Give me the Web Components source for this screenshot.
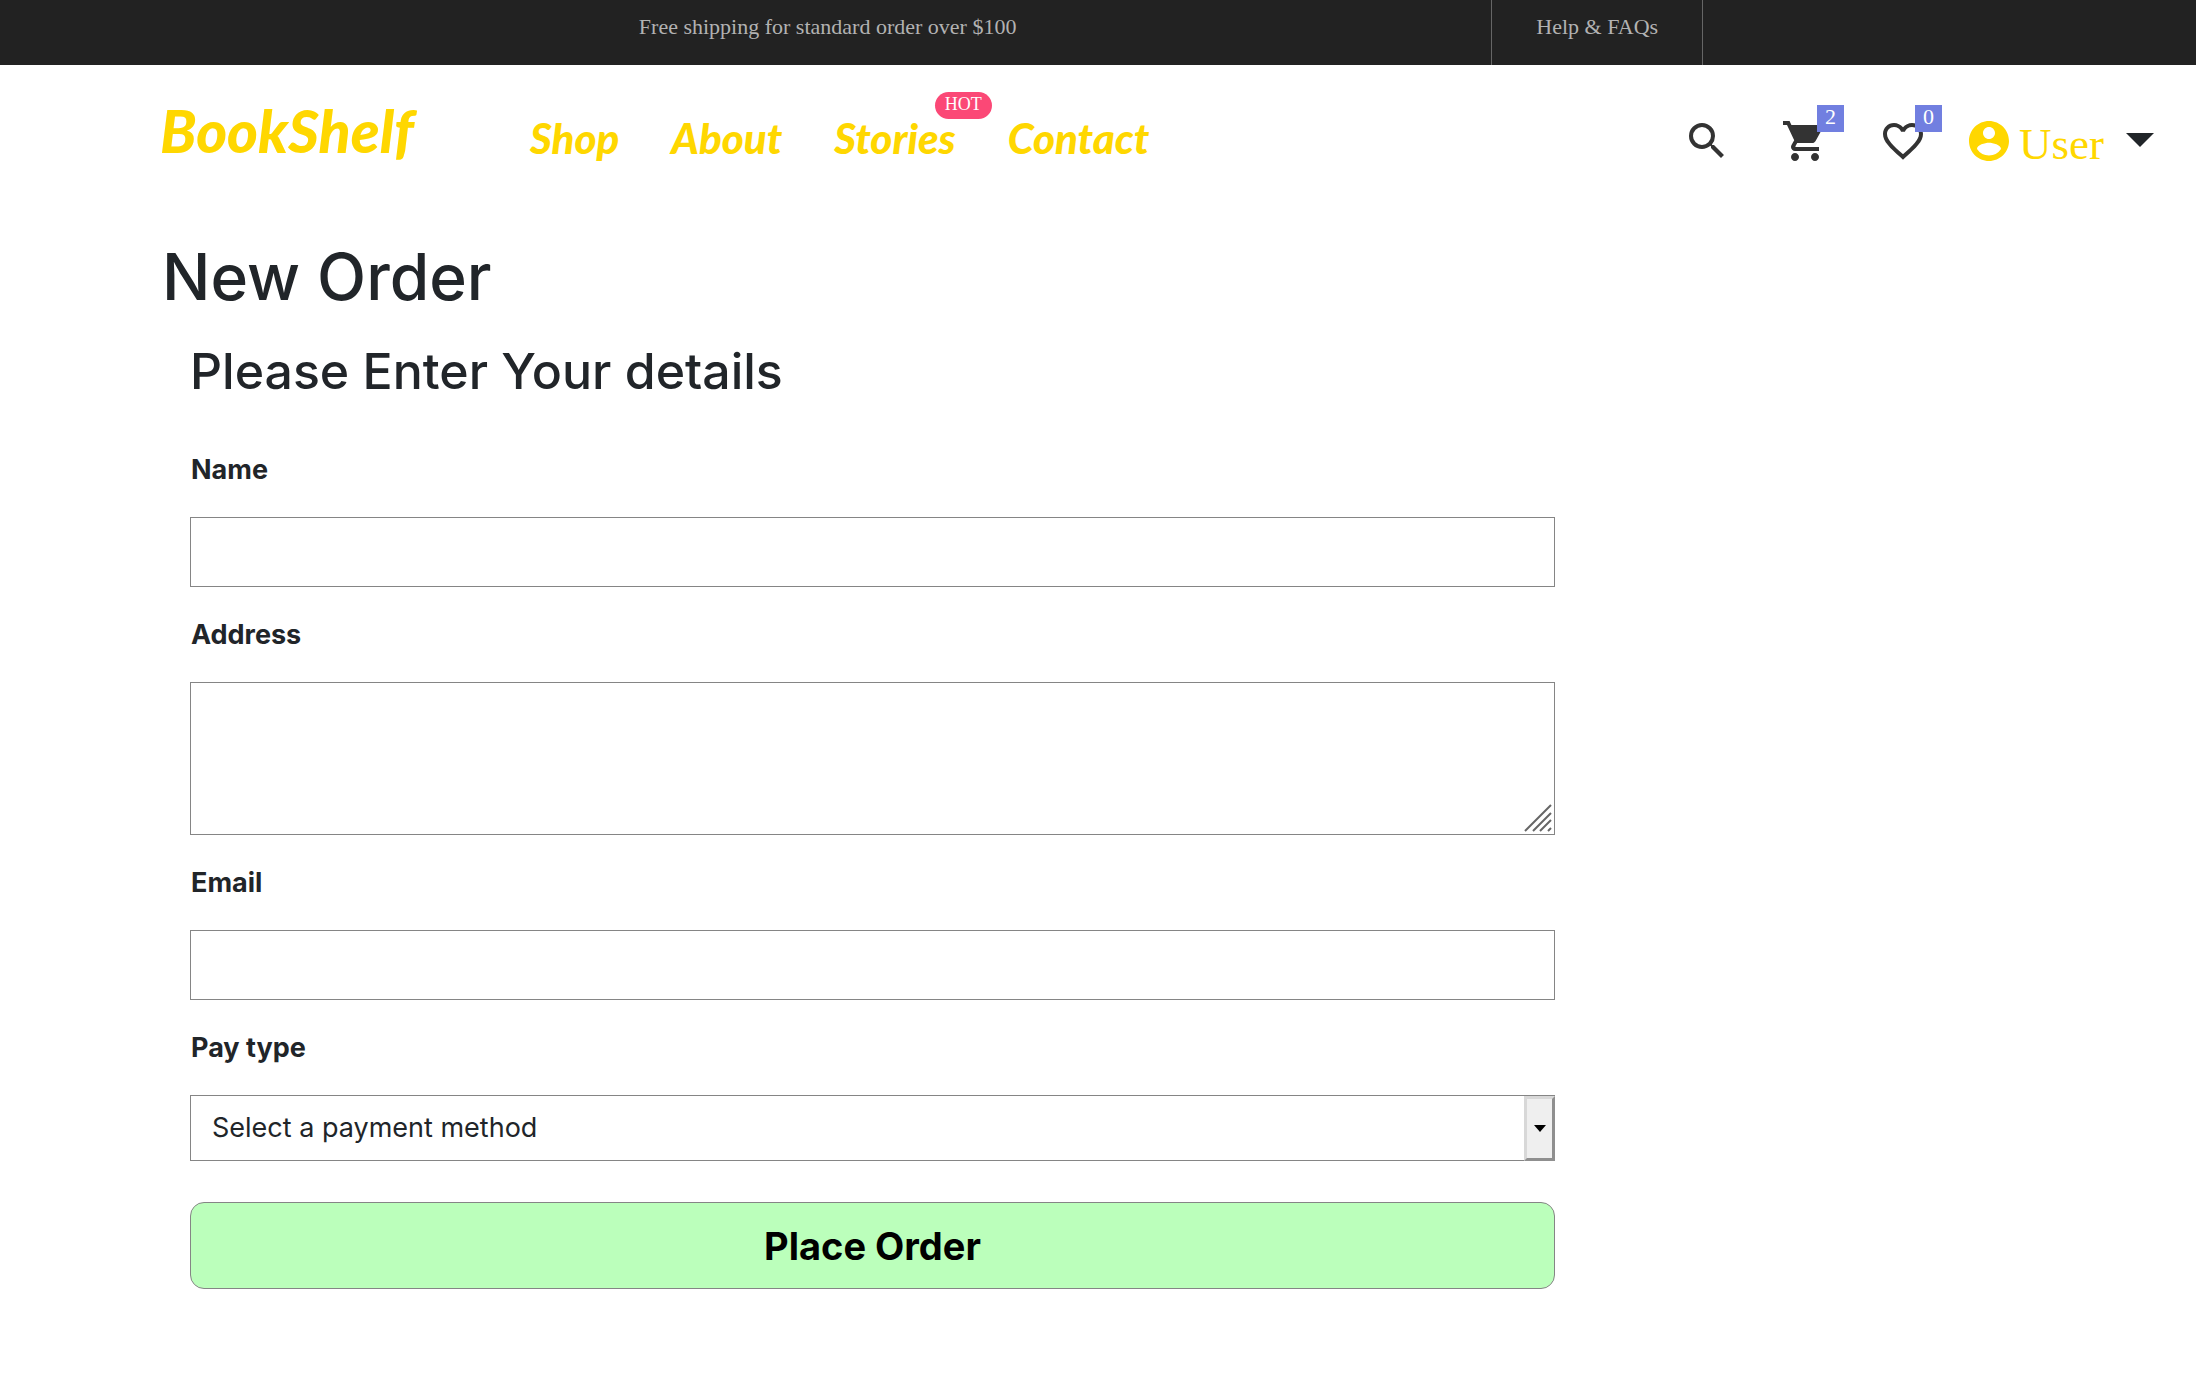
<!DOCTYPE html>
<html lang="en">
<head>
<meta charset="utf-8">
<title>BookShelf - New Order</title>
<style>
  body { margin: 0; background: #fff; color: #212529; font-family: Inter, "Liberation Sans", sans-serif; }
</style>
</head>
<body>
<top-bar></top-bar>
<site-header></site-header>
<order-page></order-page>
<script>
const BASE = '<style>*{box-sizing:border-box}a{color:inherit;text-decoration:none}</style>';
function define(name, render) {
  customElements.define(name, class extends HTMLElement {
    connectedCallback() {
      if (this.shadowRoot) return;
      this.attachShadow({ mode: 'open' }).innerHTML = BASE + render(this);
    }
  });
}

define('top-bar', () => `
<style>
  :host { display: grid; grid-template-columns: 68% auto 1fr; height: 65px; background: #222; color: #b2b2b2;
    font: 22px/54px "Liberation Serif", serif; }
  p { margin: 0; padding: 0 105px 0 267px; text-align: center; white-space: nowrap; }
  a { padding: 0 44px; border: solid #666; border-width: 0 1px; white-space: nowrap; margin-left: -2px; }
</style>
<p>Free shipping for standard order over $100</p>
<a href="#help">Help &amp; FAQs</a>`);

const ICONS = {
  search: '<path d="M15.5 14h-.79l-.28-.27A6.47 6.47 0 0 0 16 9.5 6.5 6.5 0 1 0 9.5 16c1.61 0 3.09-.59 4.23-1.57l.27.28v.79l5 4.99L20.49 19l-4.99-5zm-6 0a4.5 4.5 0 1 1 0-9 4.5 4.5 0 0 1 0 9z"/>',
  cart: '<path d="M7 18c-1.1 0-1.99.9-1.99 2S5.9 22 7 22s2-.9 2-2-.9-2-2-2zM1 2v2h2l3.6 7.59-1.35 2.45c-.16.28-.25.61-.25.96 0 1.1.9 2 2 2h12v-2H7.42c-.14 0-.25-.11-.25-.25l.03-.12.9-1.63h7.45c.75 0 1.41-.41 1.75-1.03l3.58-6.49A1 1 0 0 0 20 4H5.21l-.94-2H1zm16 16c-1.1 0-1.99.9-1.99 2s.89 2 1.99 2 2-.9 2-2-.9-2-2-2z"/>',
  heart: '<path d="M16.5 3c-1.74 0-3.41.81-4.5 2.09C10.91 3.81 9.24 3 7.5 3 4.42 3 2 5.42 2 8.5c0 3.78 3.4 6.86 8.55 11.54L12 21.35l1.45-1.32C18.6 15.36 22 12.28 22 8.5 22 5.42 19.58 3 16.5 3zm-4.4 15.55l-.1.1-.1-.1C7.14 14.24 4 11.39 4 8.5 4 6.5 5.5 5 7.5 5c1.54 0 3.04.99 3.57 2.36h1.87C13.46 5.99 14.96 5 16.5 5c2 0 3.5 1.5 3.5 3.5 0 2.89-3.14 5.74-7.9 10.05z"/>',
  user: '<path d="M12 2C6.48 2 2 6.48 2 12s4.48 10 10 10 10-4.48 10-10S17.52 2 12 2zm0 3c1.66 0 3 1.34 3 3s-1.34 3-3 3-3-1.34-3-3 1.34-3 3-3zm0 14.2a7.2 7.2 0 0 1-6-3.22c.03-1.99 4-3.08 6-3.08 1.99 0 5.97 1.09 6 3.08a7.2 7.2 0 0 1-6 3.22z"/>'
};
define('ui-icon', el => `
<style>:host{display:block;width:48px;height:48px}svg{display:block;width:100%;height:100%;fill:currentColor}</style>
<svg viewBox="0 0 24 24" aria-hidden="true">${ICONS[el.getAttribute('name')]}</svg>`);

define('icon-link', el => `
<style>
  :host { display: block; position: relative; color: #333; }
  a { display: block; }
  span { position: absolute; left: 36px; top: -12px; width: 27px; height: 27px; background: #717fe0; color: #fff;
    font: 22px/24px "Liberation Serif", serif; text-align: center; }
</style>
<a href="#${el.getAttribute('name')}" aria-label="${el.getAttribute('name')}"><ui-icon name="${el.getAttribute('name')}"></ui-icon>${el.hasAttribute('count') ? `<span>${el.getAttribute('count')}</span>` : ''}</a>`);

define('nav-link', el => `
<style>
  :host { display: block; position: relative; }
  span { position: absolute; right: -36px; top: -14px; height: 27px; padding: 0 10px; border-radius: 14px; background: #fb4876;
    color: #fff; font: normal 18px/25px "Liberation Serif", serif; }
</style>
<a href="#"><slot></slot></a>${el.hasAttribute('badge') ? `<span>${el.getAttribute('badge')}</span>` : ''}`);

define('site-header', () => `
<style>
  :host { display: flex; align-items: flex-start; height: 136px; padding: 36px 42px 0 160px; color: gold; }
  .logo, nav { font: italic 900 42px/64px "Brush Script MT", Lato, cursive; white-space: nowrap; }
  .logo { font-size: 59px; line-height: 60px; width: 370px; }
  nav { display: flex; gap: 52px; margin-top: 5px; }
  .tools { display: flex; gap: 50px; margin: 16px 0 0 auto; }
  .user { display: flex; align-items: center; gap: 6px; height: 48px; margin-left: -12px; font: 45px/48px "Liberation Serif", serif; }
  .user span { padding-top: 6px; }
  .user svg { display: block; margin: -2px 0 0 16px; fill: #212529; }
</style>
<a class="logo" href="#">BookShelf</a>
<nav>
  <nav-link>Shop</nav-link><nav-link>About</nav-link><nav-link badge="HOT">Stories</nav-link><nav-link>Contact</nav-link>
</nav>
<div class="tools">
  <icon-link name="search"></icon-link><icon-link name="cart" count="2"></icon-link><icon-link name="heart" count="0"></icon-link>
  <a class="user" href="#user"><ui-icon name="user"></ui-icon><span>User</span><svg width="28" height="14" viewBox="0 0 28 14" aria-hidden="true"><path d="M0 0h28L14 14z"/></svg></a>
</div>`);

define('form-field', el => {
  const kind = el.getAttribute('kind');
  const control = {
    text: '<input id="c" type="text">',
    email: '<input id="c" type="email">',
    area: '<textarea id="c"></textarea><svg class="grip" width="28" height="28" viewBox="0 0 28 28" aria-hidden="true"><path d="M1 27 27 1M9 27 27 9M16 27 27 16M24 27l3-3"/></svg>',
    select: '<select id="c"><option>Select a payment method</option></select><span class="arrow"><svg width="12" height="7" viewBox="0 0 12 7" aria-hidden="true"><path d="M0 0h12L6 7z"/></svg></span>'
  }[kind];
  return `
<style>
  :host { display: block; }
  label { display: block; padding: 28px 0 27px 1px; font-size: 27px; font-weight: 700; line-height: 40px; }
  .box { position: relative; }
  input, textarea, select { display: block; width: 100%; height: 70px; margin: 0; padding: 0 21px; border: 1px solid #858585;
    border-radius: 0; background: #fff; color: #212529; font: 27px/40px Inter, sans-serif; appearance: none; }
  textarea { height: 153px; padding: 14px 21px; resize: none; }
  select { height: 66px; }
  .grip { position: absolute; right: 3px; bottom: 3px; fill: none; stroke: #666; stroke-width: 2; pointer-events: none; }
  .arrow { position: absolute; top: 1px; right: 0; bottom: 0; width: 31px; display: grid; place-items: center; background: #efefef;
    border: 3px solid; border-color: #d8d8d8 #8f8f8f #8f8f8f #d8d8d8; pointer-events: none; }
</style>
<label for="c">${el.getAttribute('label')}</label>
<div class="box">${control}</div>`;
});

define('order-page', () => `
<style>
  :host { display: block; padding: 0 84px 80px 162px; }
  h1, h2 { margin: 0; font-weight: 500; }
  h1 { font-size: 64px; line-height: 80px; }
  h2 { font-size: 50px; line-height: 64px; padding: 22px 0 19px; }
  form { width: 70%; margin-left: 28px; }
  button { display: block; width: 100%; height: 87px; margin-top: 41px; border: 1px solid #858585; border-radius: 14px;
    background: #bfb; color: #000; font: 700 38px/48px Inter, sans-serif; }
</style>
<h1>New Order</h1>
<form>
  <h2>Please Enter Your details</h2>
  <form-field kind="text" label="Name"></form-field>
  <form-field kind="area" label="Address"></form-field>
  <form-field kind="email" label="Email"></form-field>
  <form-field kind="select" label="Pay type"></form-field>
  <button type="button">Place Order</button>
</form>`);
</script>
</body>
</html>
